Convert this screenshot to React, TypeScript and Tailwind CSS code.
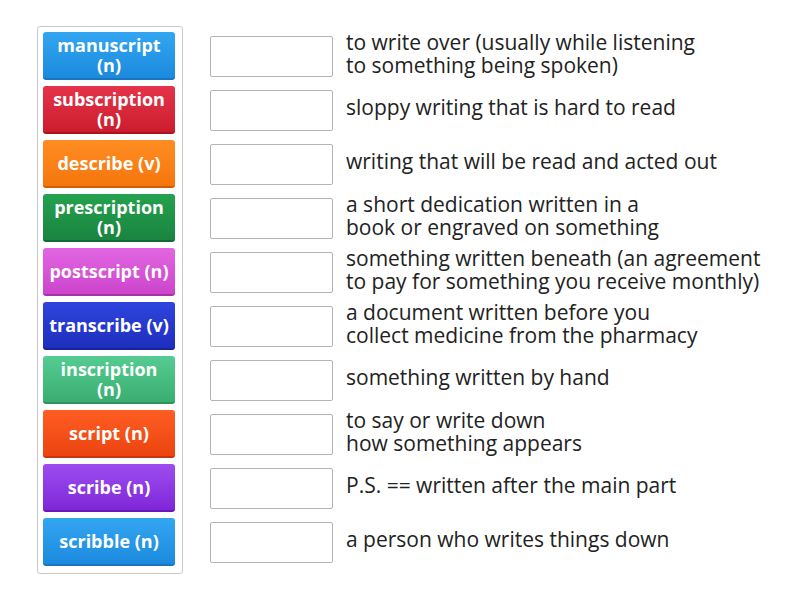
const tiles = [
  { label: ["manuscript", "(n)"], cls: "from-[#33a6f2] to-[#1b8ade] border-[#1776c2]" },
  { label: ["subscription", "(n)"], cls: "from-[#e5334a] to-[#cc1d2e] border-[#a9141f]" },
  { label: ["describe (v)"], cls: "from-[#ff8d22] to-[#f5760c] border-[#d05d06]" },
  { label: ["prescription", "(n)"], cls: "from-[#24a24e] to-[#1a8440] border-[#126932]" },
  { label: ["postscript (n)"], cls: "from-[#e266e2] to-[#cc44cc] border-[#aa30aa]" },
  { label: ["transcribe (v)"], cls: "from-[#2e44dd] to-[#1f2fbd] border-[#17239a]" },
  { label: ["inscription", "(n)"], cls: "from-[#55cc92] to-[#3aae72] border-[#2c9260]" },
  { label: ["script (n)"], cls: "from-[#ff5d24] to-[#ec440e] border-[#c83508]" },
  { label: ["scribe (n)"], cls: "from-[#9d4cf0] to-[#7f26d8] border-[#6718b8]" },
  { label: ["scribble (n)"], cls: "from-[#33a6f2] to-[#1b8ade] border-[#1776c2]" },
];

const definitions = [
  ["to write over (usually while listening", "to something being spoken)"],
  ["sloppy writing that is hard to read"],
  ["writing that will be read and acted out"],
  ["a short dedication written in a", "book or engraved on something"],
  ["something written beneath (an agreement", "to pay for something you receive monthly)"],
  ["a document written before you", "collect medicine from the pharmacy"],
  ["something written by hand"],
  ["to say or write down", "how something appears"],
  ["P.S. == written after the main part"],
  ["a person who writes things down"],
];

export default function App() {
  return (
    <div className="w-[800px] h-[600px] bg-white flex items-start pl-[37px] pt-[26px] font-['Open_Sans',sans-serif]">
      {/* word tiles */}
      <div className="border border-[#c8c8c8] rounded-[3px] pl-[5px] pr-[7px] pt-[5px] pb-[7px] flex flex-col gap-[6px]">
        {tiles.map((t, i) => (
          <div
            key={i}
            className={`w-[132px] h-[48px] rounded-[3px] bg-linear-to-b border-b-2 ${t.cls} flex flex-col items-center justify-center text-white font-bold text-[18px] leading-[20px] text-center whitespace-nowrap`}
          >
            {t.label.map((l, j) => (
              <span key={j}>{l}</span>
            ))}
          </div>
        ))}
      </div>

      {/* answer boxes and definitions */}
      <div className="ml-[27px] mt-[10px] flex flex-col gap-[13px]">
        {definitions.map((d, i) => (
          <div key={i} className="flex items-center h-[41px]">
            <div className="w-[123px] h-[41px] border border-[#b4b4b4] rounded-[2px] bg-white shrink-0" />
            <div className="ml-[13px] mb-[6px] text-[21px] leading-[23px] text-[#222] whitespace-nowrap">
              {d.map((l, j) => (
                <div key={j}>{l}</div>
              ))}
            </div>
          </div>
        ))}
      </div>
    </div>
  );
}
